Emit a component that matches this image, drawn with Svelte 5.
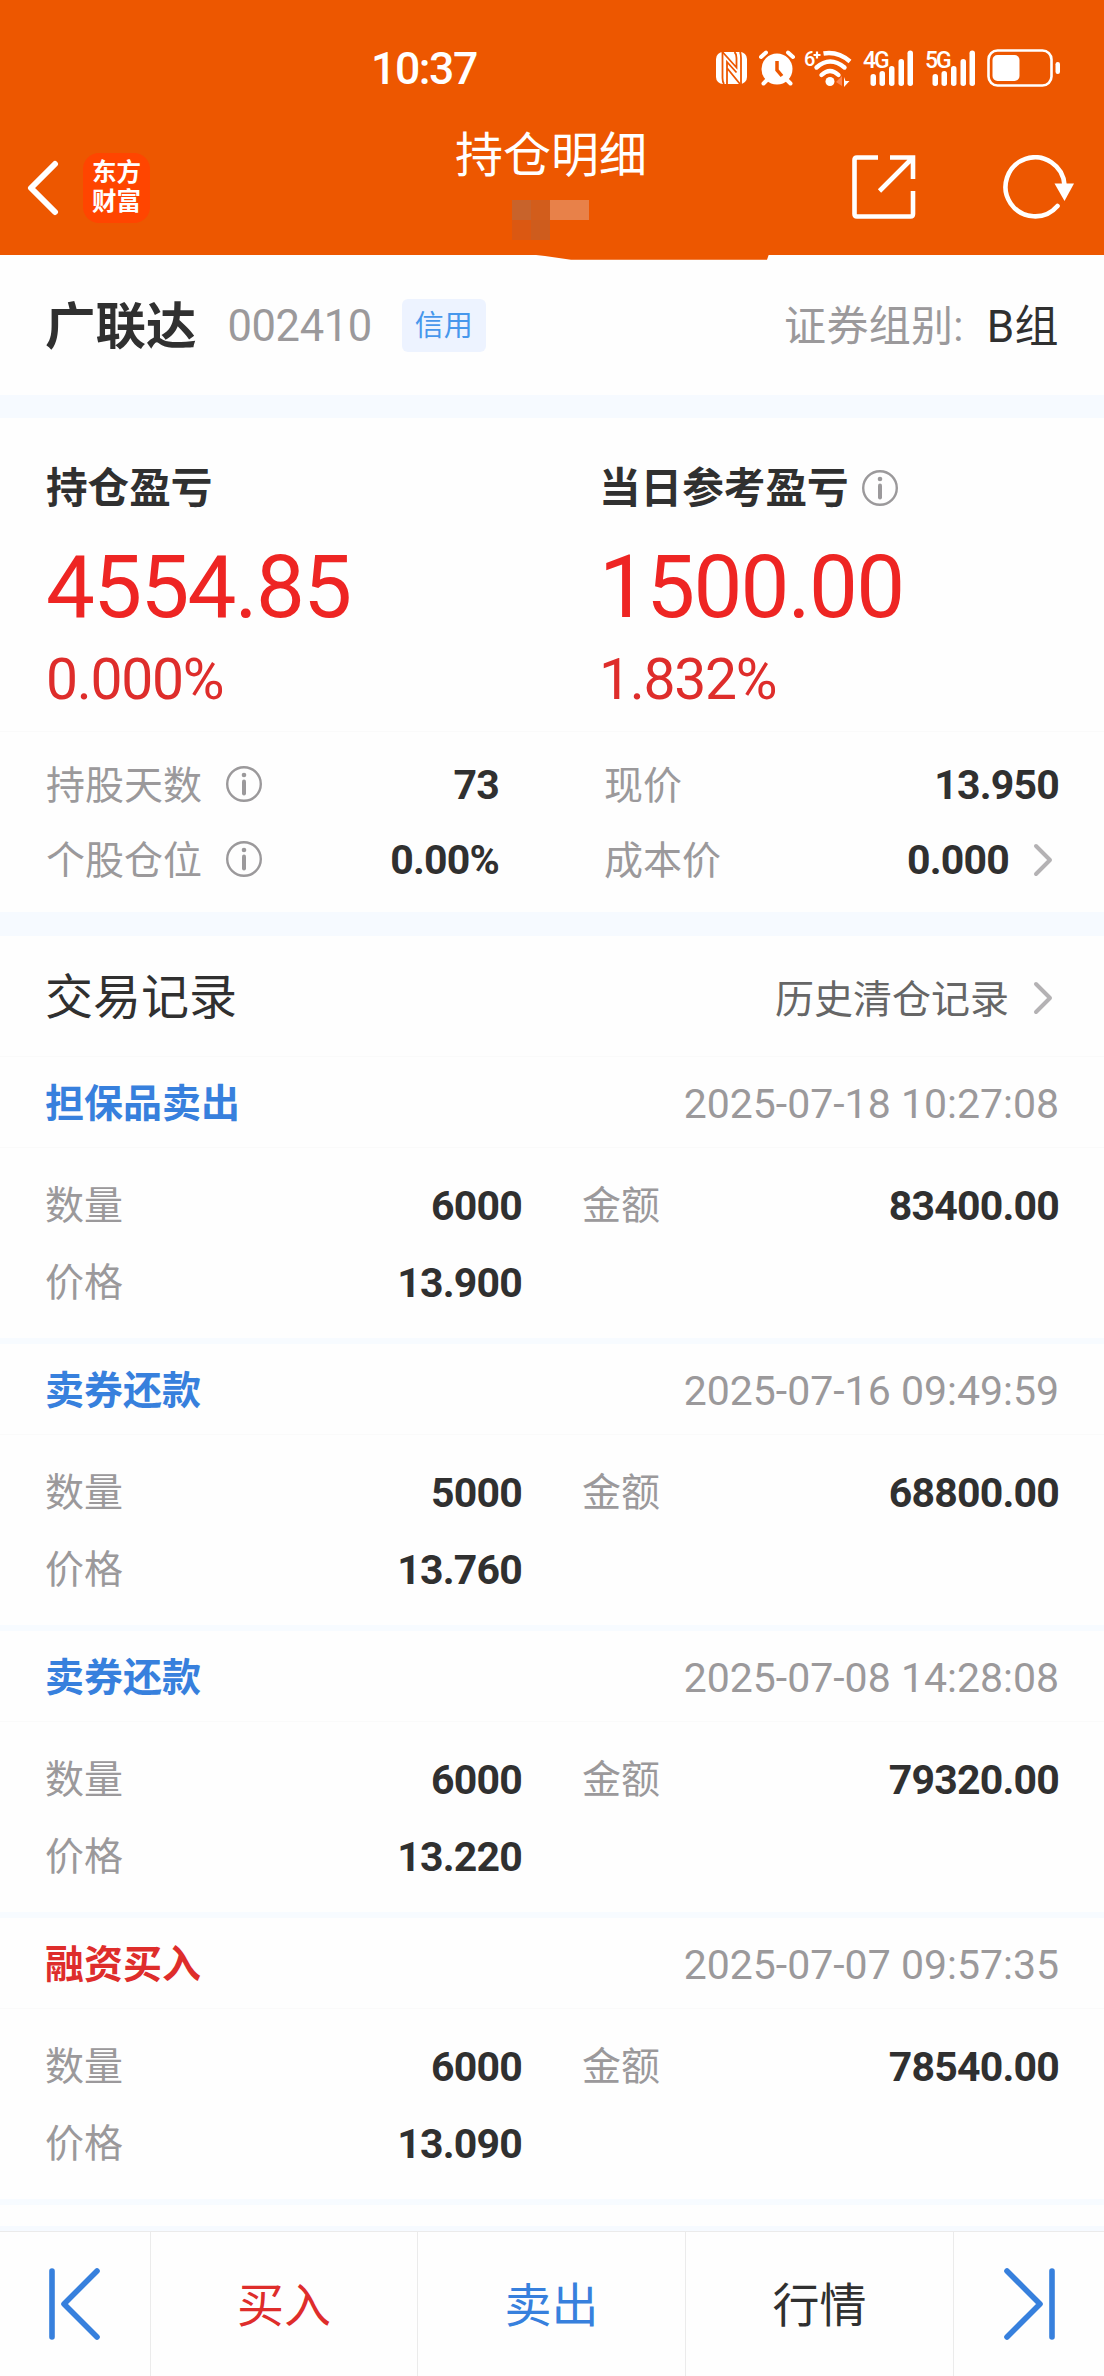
<script>
  const records = [
    { type: '担保品卖出', side: 'sell', time: '2025-07-18 10:27:08', qty: '6000', amount: '83400.00', price: '13.900' },
    { type: '卖券还款', side: 'sell', time: '2025-07-16 09:49:59', qty: '5000', amount: '68800.00', price: '13.760' },
    { type: '卖券还款', side: 'sell', time: '2025-07-08 14:28:08', qty: '6000', amount: '79320.00', price: '13.220' },
    { type: '融资买入', side: 'buy', time: '2025-07-07 09:57:35', qty: '6000', amount: '78540.00', price: '13.090' },
  ]
</script>

{#snippet info()}
  <svg class="info" viewBox="0 0 36 36" fill="none" stroke="#9b999b">
    <circle cx="18" cy="18" r="16.8" stroke-width="2.4" />
    <path d="M18 15.5v12" stroke-width="4" stroke-linecap="round" />
    <circle cx="18" cy="9" r="2.3" fill="#9b999b" stroke="none" />
  </svg>
{/snippet}

{#snippet chevron()}
  <svg class="chevron" viewBox="0 0 20 34" fill="none" stroke="#b4b2b4" stroke-width="4" stroke-linecap="round" stroke-linejoin="round">
    <path d="M3 3L17 17L3 31" />
  </svg>
{/snippet}

{#snippet signal(label)}
  <div class="signal">
    <span>{label}</span>
    <svg viewBox="0 0 51 38" fill="#fff">
      <rect x="7.5" y="25" width="5.5" height="12" rx="2.7" />
      <rect x="16.5" y="22" width="5.5" height="15" rx="2.7" />
      <rect x="26" y="17" width="5.5" height="20" rx="2.7" />
      <rect x="35.5" y="10" width="5.5" height="27" rx="2.7" />
      <rect x="44.5" y="1.5" width="5.5" height="35.5" rx="2.7" />
    </svg>
  </div>
{/snippet}

<main>
  <header>
    <div class="status">
      <span class="clock">10:37</span>
      <div class="status-icons">
        <svg class="nfc" viewBox="0 0 31 34" fill="none" stroke="#ed5700" stroke-width="1.8">
          <rect y="1" width="31" height="32" rx="7" fill="#fff" stroke="none" />
          <path d="M6.5 1L20.5 16.5V7Q20.5 3 18.5 1M24 1Q25 3 25 7V33" />
          <path d="M6.5 1V27Q6.5 31 8 33M11 33V11L20.5 21.5M11 17L24 33" />
        </svg>
        <svg class="alarm" viewBox="0 0 36 36" fill="none" stroke="#fff" stroke-linecap="round">
          <circle cx="18" cy="19" r="15.5" fill="#fff" stroke="none" />
          <path d="M2 7L7 2.5M34 7L29 2.5M8 30L4.5 33.5M28 30L31.5 33.5" stroke-width="4" />
          <path d="M18 11v9l5 6" stroke="#ed5700" stroke-width="3.5" stroke-linecap="butt" />
        </svg>
        <div class="wifi">
          <span>6</span>
          <svg viewBox="0 0 48 38" fill="none" stroke="#fff" stroke-width="4.4">
            <path d="M19.5 4.5Q34 2 46 12.5" />
            <path d="M12.5 18.5Q26 6.5 40.5 18.5M17.5 26Q26 18 34.5 26" stroke-linecap="round" />
            <circle cx="26" cy="32.5" r="4.5" fill="#fff" stroke="none" />
            <path d="M32 33l6-6v10z" fill="#ff844e" stroke="none" />
            <path d="M40 28l1.5 4h4l-5.5 6z" fill="#fff" stroke="none" />
            <path d="M9.5 6h7M13 2.5v7" stroke-width="2.2" />
          </svg>
        </div>
        {@render signal('4G')}
        {@render signal('5G')}
        <svg class="battery" viewBox="0 0 74 38" fill="none">
          <rect x="1.5" y="1.5" width="63" height="35" rx="9" stroke="#fff" stroke-width="2.6" />
          <rect x="5.5" y="6" width="27" height="26" rx="5" fill="#fff" />
          <rect x="68.5" y="13" width="4.5" height="12" rx="2.2" fill="#fff" />
        </svg>
      </div>
    </div>

    <div class="titlebar">
      <div class="left">
        <svg class="back" viewBox="0 0 32 56" fill="none" stroke="#fff" stroke-width="6" stroke-linecap="round" stroke-linejoin="round">
          <path d="M28 4L4 28L28 52" />
        </svg>
        <div class="logo"><span>东方</span><span>财富</span></div>
      </div>
      <div class="title">
        <h1>持仓明细</h1>
        <svg class="masked" viewBox="0 0 77 40" shape-rendering="crispEdges">
          <rect width="19" height="20" fill="#c8632b" />
          <rect x="19" width="19" height="20" fill="#d25d1c" />
          <rect y="20" width="19" height="20" fill="#db5812" />
          <rect x="19" y="20" width="19" height="20" fill="#ce5c1d" />
          <rect x="38" width="39" height="20" fill="#e88149" />
        </svg>
      </div>
      <div class="actions">
        <svg class="share" viewBox="0 0 64 64" fill="none" stroke="#fff" stroke-width="4.6">
          <path d="M26 2.5H5Q2.5 2.5 2.5 5V59Q2.5 61.5 5 61.5H58.5Q61 61.5 61 59V36" />
          <path d="M38 2.5H61V24M61 2.5L27.5 36" />
        </svg>
        <svg class="refresh" viewBox="0 0 72 64" fill="none">
          <path d="M54.5 51A29.5 29.5 0 1 1 61.5 30" stroke="#fff" stroke-width="4.6" stroke-linecap="round" />
          <path d="M51.5 28.5H71L61.5 46z" fill="#fff" />
        </svg>
      </div>
    </div>
    <svg class="edge" viewBox="0 0 244 6"><path d="M0 0L18 2L44 5.700H240L242 0z" fill="#ed5700" /></svg>
  </header>

  <section class="stock">
    <strong>广联达</strong>
    <span class="code">002410</span>
    <span class="badge">信用</span>
    <span class="group">证券组别:</span>
    <span class="group-value">B组</span>
  </section>

  <section class="profit">
    <div>
      <h2>持仓盈亏</h2>
      <p class="big">4554.85</p>
      <p class="rate">0.000%</p>
    </div>
    <div>
      <h2>当日参考盈亏 {@render info()}</h2>
      <p class="big">1500.00</p>
      <p class="rate">1.832%</p>
    </div>
  </section>

  <section class="facts">
    <div class="fact"><span>持股天数</span>{@render info()}<b>73</b></div>
    <div class="fact"><span>现价</span><b>13.950</b></div>
    <div class="fact"><span>个股仓位</span>{@render info()}<b>0.00%</b></div>
    <div class="fact"><span>成本价</span><b>0.000</b>{@render chevron()}</div>
  </section>

  <section class="history">
    <h3>交易记录</h3>
    <span class="more">历史清仓记录</span>
    {@render chevron()}
  </section>

  {#each records as r}
    <article>
      <div class="record-head">
        <span class={r.side}>{r.type}</span>
        <time>{r.time}</time>
      </div>
      <div class="record-body">
        <span>数量</span><b>{r.qty}</b>
        <span class="second">金额</span><b>{r.amount}</b>
        <span>价格</span><b>{r.price}</b>
      </div>
    </article>
  {/each}
  <div class="list-end"></div>

  <nav>
    <button class="step" aria-label="上一个">
      <svg viewBox="0 0 52 72" fill="none" stroke="#3780dd" stroke-width="5.6" stroke-linecap="round" stroke-linejoin="round">
        <path d="M3 3V69M48 3L15 36L48 69" />
      </svg>
    </button>
    <button class="buy">买入</button>
    <button class="sell">卖出</button>
    <button>行情</button>
    <button class="step" aria-label="下一个">
      <svg viewBox="0 0 52 72" fill="none" stroke="#3780dd" stroke-width="5.6" stroke-linecap="round" stroke-linejoin="round">
        <path d="M49 3V69M4 3L37 36L4 69" />
      </svg>
    </button>
  </nav>
</main>

<style>
  :global(body) {
    margin: 0;
    background: #fefefe;
  }

  * {
    box-sizing: border-box;
    margin: 0;
    padding: 0;
  }

  main {
    display: flex;
    flex-direction: column;
    width: 1104px;
    height: 2376px;
    overflow: hidden;
    font-family: Roboto, "Noto Sans CJK SC", sans-serif;
    font-size: 39px;
    line-height: 1;
    color: #303030;
    background: #fefefe;
  }

  svg {
    display: block;
    flex: none;
  }

  /* header */
  header {
    position: relative;
    height: 255px;
    background: #ed5700;
    color: #fff;
  }

  .status {
    display: flex;
    justify-content: space-between;
    align-items: center;
    height: 110px;
    padding: 26px 43px 0 371px;
  }

  .clock {
    padding-top: 2px;
    font-size: 44.5px;
    font-weight: 500;
    letter-spacing: -1.4px;
  }

  .status-icons {
    display: flex;
    align-items: center;
  }

  .nfc { width: 31px; height: 34px; }
  .alarm { width: 36px; height: 36px; margin-left: 12px; }
  .battery { width: 74px; height: 38px; margin-left: 11px; }

  .wifi,
  .signal {
    display: grid;
    height: 38px;
    font-weight: 500;
  }

  /* network label shares the cell with its bars */
  .wifi > *,
  .signal > * {
    grid-area: 1 / 1;
  }

  .wifi {
    width: 48px;
    margin-left: 9px;
    font-size: 20px;
  }

  .signal {
    width: 51px;
    margin-left: 11px;
    font-size: 23px;
    letter-spacing: -2px;
  }

  .wifi svg { width: 48px; height: 38px; }
  .signal svg { width: 51px; height: 38px; }

  .titlebar {
    display: grid;
    grid-template-columns: 1fr auto 1fr;
    height: 145px;
    padding: 0 29px 0 27px;
  }

  .left {
    display: flex;
    align-items: center;
    height: 155px;
  }

  .back {
    width: 32px;
    height: 56px;
  }

  .logo {
    display: flex;
    flex-direction: column;
    justify-content: center;
    gap: 5px;
    width: 67px;
    height: 70px;
    margin-left: 24px;
    border-radius: 16px;
    background: #ff4500;
    font-size: 24.5px;
    font-weight: 700;
    text-align: center;
  }

  .title {
    display: flex;
    flex-direction: column;
    align-items: center;
    padding-top: 22px;
  }

  h1 {
    font-size: 48px;
    font-weight: 400;
    line-height: 48px;
  }

  .masked {
    width: 77px;
    height: 40px;
    margin-top: 20px;
  }

  .actions {
    display: flex;
    align-items: center;
    justify-content: flex-end;
    height: 154px;
  }

  .share { width: 64px; height: 64px; }
  .refresh { width: 72px; height: 64px; margin-left: 87px; }

  .edge {
    position: absolute;
    left: 527px;
    top: 254px;
    width: 244px;
    height: 6px;
  }

  /* stock name */
  .stock {
    display: flex;
    align-items: center;
    height: 163px;
    padding: 4px 45px 0;
    border-bottom: 23px solid #f6faff;
  }

  .stock strong {
    font-size: 50.5px;
  }

  .code {
    margin-left: 31px;
    font-size: 43.5px;
    letter-spacing: -0.4px;
    color: #9b999b;
  }

  .badge {
    width: 84px;
    margin: 0 0 4px 30px;
    padding-top: 2px;
    border-radius: 6px;
    background: #edf3ff;
    color: #4797ec;
    font-size: 29px;
    line-height: 51px;
    text-align: center;
  }

  .group {
    margin-left: auto;
    font-size: 42px;
    letter-spacing: 0.3px;
    color: #9b999b;
  }

  .group-value {
    margin-left: 23px;
    font-size: 44px;
    letter-spacing: 0.4px;
  }

  /* profit */
  .profit {
    display: grid;
    grid-template-columns: 553px 1fr;
    height: 314px;
    padding: 50px 0 0 46px;
    border-bottom: 1px solid #fafafa;
  }

  h2 {
    display: flex;
    align-items: center;
    gap: 13px;
    font-size: 41.6px;
    line-height: 42px;
  }

  h2 .info {
    margin-top: -2px;
  }

  .big {
    margin-top: 32px;
    font-size: 87px;
    line-height: 90px;
    letter-spacing: -1.7px;
    color: #ee2523;
  }

  .rate {
    margin-top: 20px;
    font-size: 57px;
    line-height: 56px;
    letter-spacing: -1.3px;
    color: #de2d2b;
  }

  .info {
    width: 36px;
    height: 36px;
  }

  .chevron {
    width: 20px;
    height: 34px;
    margin-left: 24px;
    margin-right: 6px;
  }

  .facts {
    display: grid;
    grid-template-columns: 453px 455px;
    column-gap: 105px;
    grid-auto-rows: 75px;
    height: 204px;
    padding: 16px 45px 0 46px;
    border-bottom: 24px solid #f6faff;
  }

  .fact {
    display: flex;
    align-items: center;
    color: #9b999b;
  }

  .fact span {
    padding-top: 2px;
  }

  .fact .info {
    margin: -3px 0 0 24px;
  }

  .fact .chevron {
    margin-top: -2px;
  }

  b {
    margin-left: auto;
    font-size: 41px;
    font-weight: 700;
    letter-spacing: -0.8px;
    color: #303030;
  }

  .history {
    display: flex;
    align-items: center;
    height: 121px;
    padding: 3px 45px 0;
    border-bottom: 1px solid #fafafa;
  }

  h3 {
    font-size: 48px;
    font-weight: 400;
  }

  .more {
    margin-left: auto;
    padding-top: 5px;
    color: #666;
  }

  /* records */
  article {
    height: 287px;
    border-bottom: 6px solid #f7fbff;
  }

  .record-head {
    display: flex;
    align-items: center;
    justify-content: space-between;
    height: 91px;
    padding: 4px 45px 0;
    border-bottom: 1px solid #fafafa;
    font-weight: 700;
  }

  time {
    font-size: 41px;
    font-weight: 400;
    color: #9b999b;
  }

  .buy { color: #de2d2b; }
  .sell { color: #3780dd; }

  .record-body {
    display: grid;
    grid-template-columns: 100px 377px 160px 1fr;
    grid-auto-rows: 77px;
    align-items: center;
    padding: 20px 45px 0;
    color: #9b999b;
  }

  .second {
    padding-left: 60px;
  }

  .list-end {
    height: 26px;
    border-bottom: 5px solid #f6faff;
  }

  /* bottom bar */
  nav {
    display: grid;
    grid-template-columns: 151px 267px 268px 268px 150px;
    flex: 1;
    border-top: 1px solid #ebebeb;
  }

  button {
    display: flex;
    align-items: center;
    justify-content: center;
    padding-top: 3px;
    border: 0;
    border-right: 1px solid #ebebeb;
    background: none;
    font-family: inherit;
    font-size: 47px;
    line-height: 1;
  }

  button:not(.buy):not(.sell) {
    color: #303030;
  }

  button:last-child {
    border-right: 0;
  }

  .step {
    padding-top: 0;
  }

  .step svg {
    width: 52px;
    height: 72px;
  }
</style>
